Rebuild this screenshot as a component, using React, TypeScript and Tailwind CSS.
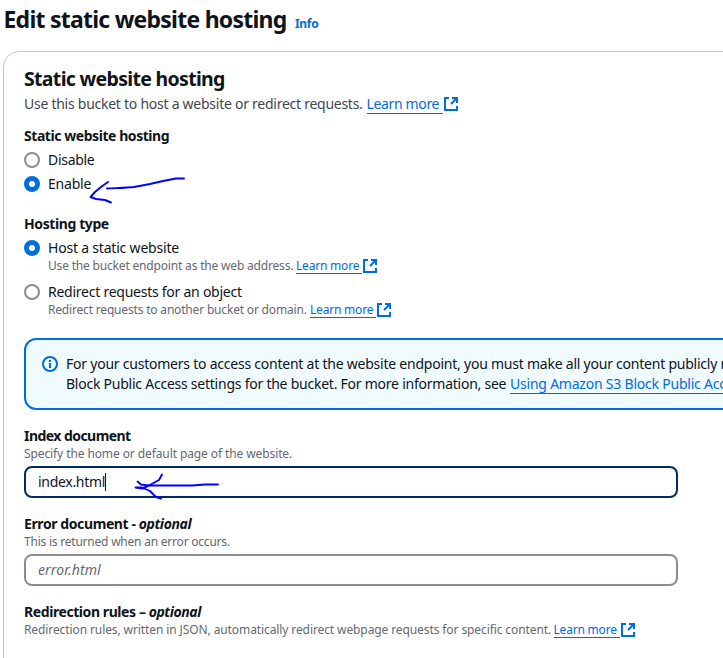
import React from "react";

function ExternalIcon() {
  return (
    <svg className="inline-block h-4 w-4 shrink-0" viewBox="0 0 16 16" fill="none" stroke="#006ce0" strokeWidth="2">
      <path d="M6 2H2v12h12v-4" />
      <path d="M9 2h5v5M14 2L8 8" />
    </svg>
  );
}

function LearnMore({ small = false }: { small?: boolean }) {
  return (
    <a className="flex text-[#006ce0]">
      <span
        className={
          small
            ? "h-4 w-[66px] border-b border-[#006ce0] tracking-[-0.2px]"
            : "h-5 w-[76px] border-b border-[#006ce0] tracking-[-0.35px]"
        }
      >
        Learn more
      </span>
      <span className={small ? "flex" : "flex pt-0.5"}>
        <ExternalIcon />
      </span>
    </a>
  );
}

function Radio({ checked = false }: { checked?: boolean }) {
  return (
    <span
      className={
        checked
          ? "mt-0.5 box-border h-4 w-4 shrink-0 rounded-full border-5 border-[#006ce0] bg-white"
          : "mt-0.5 box-border h-4 w-4 shrink-0 rounded-full border-2 border-[#8c8c94] bg-white"
      }
    />
  );
}

export default function App() {
  return (
    <div className="relative h-[658px] w-[723px] overflow-hidden bg-white font-['Noto_Sans',sans-serif] text-sm leading-5 whitespace-nowrap text-[#0f141a]">
      <header className="flex h-[51px] items-baseline pt-1 pl-[3.5px]">
        <h1 className="w-[291.5px] text-[23px] leading-[31px] font-bold tracking-[-0.76px]">Edit static website hosting</h1>
        <a className="text-xs font-bold tracking-[-0.3px] text-[#006ce0]">Info</a>
      </header>

      <main className="ml-[3px] h-[640px] w-[800px] rounded-tl-2xl border border-[#c6c6cd] pt-[15px] pl-5">
        <h2 className="text-[19.5px] leading-6 font-bold tracking-[-0.68px]">Static website hosting</h2>
        <div className="mt-[3px] flex text-[#424650]">
          <p className="w-[342.5px] tracking-[-0.26px]">Use this bucket to host a website or redirect requests.</p>
          <LearnMore />
        </div>

        <h3 className="mt-3 font-bold tracking-[-0.44px]">Static website hosting</h3>
        <div className="mt-1 flex gap-2">
          <Radio />
          <span className="tracking-[-0.3px]">Disable</span>
        </div>
        <div className="mt-1 flex gap-2">
          <Radio checked />
          <span className="tracking-[-0.2px]">Enable</span>
        </div>

        <h3 className="mt-5 font-bold tracking-[-0.4px]">Hosting type</h3>
        <div className="mt-1 flex gap-2">
          <Radio checked />
          <div>
            <div className="tracking-[-0.2px]">Host a static website</div>
            <div className="flex text-xs leading-4 text-[#656871]">
              <p className="w-[248px] tracking-[-0.18px]">Use the bucket endpoint as the web address.</p>
              <LearnMore small />
            </div>
          </div>
        </div>
        <div className="mt-2 flex gap-2">
          <Radio />
          <div>
            <div className="tracking-[-0.25px]">Redirect requests for an object</div>
            <div className="flex text-xs leading-4 text-[#656871]">
              <p className="w-[262px] tracking-[-0.18px]">Redirect requests to another bucket or domain.</p>
              <LearnMore small />
            </div>
          </div>
        </div>

        <section className="mt-5 flex h-[72px] rounded-xl border-2 border-[#006ce0] bg-[#f0fbff] pt-3.5 pl-4">
          <svg className="mt-0.5 mr-2 h-4 w-4 shrink-0" viewBox="0 0 16 16" fill="none" stroke="#006ce0" strokeWidth="2">
            <circle cx="8" cy="8" r="7" />
            <path d="M8 4v2M8 7v5" />
          </svg>
          <div>
            <p className="tracking-[-0.23px]">
              For your customers to access content at the website endpoint, you must make all your content publicly readable.
            </p>
            <div className="flex">
              <span className="w-[444px] tracking-[-0.24px]">Block Public Access settings for the bucket. For more information, see</span>
              <a className="h-5 border-b border-[#006ce0] tracking-[-0.22px] text-[#006ce0]">Using Amazon S3 Block Public Access</a>
            </div>
          </div>
        </section>

        <h3 className="mt-4 font-bold tracking-[-0.55px]">Index document</h3>
        <p className="text-xs leading-4 tracking-[-0.1px] text-[#656871]">Specify the home or default page of the website.</p>
        <div className="mt-1 flex h-8 w-[654px] items-center rounded-lg border-2 border-[#002b66] bg-white pl-3">
          <span className="tracking-[-0.3px]">index.html</span>
          <span className="h-[18px] w-px bg-black" />
        </div>

        <h3 className="mt-4 font-bold tracking-[-0.4px]">
          Error document - <em>optional</em>
        </h3>
        <p className="text-xs leading-4 tracking-[-0.22px] text-[#656871]">This is returned when an error occurs.</p>
        <div className="mt-1 flex h-8 w-[654px] items-center rounded-lg border-2 border-[#8c8c94] bg-white pl-3">
          <span className="tracking-[0.1px] text-[#656871] italic">error.html</span>
        </div>

        <h3 className="mt-4 font-bold tracking-[-0.42px]">
          Redirection rules – <em>optional</em>
        </h3>
        <div className="flex text-xs leading-4 text-[#656871]">
          <p className="w-[529.5px] tracking-[-0.1px]">Redirection rules, written in JSON, automatically redirect webpage requests for specific content.</p>
          <LearnMore small />
        </div>
      </main>

      <svg
        className="pointer-events-none absolute inset-0"
        width="723"
        height="658"
        fill="none"
        stroke="#0000ff"
        strokeWidth="1.9"
        strokeLinecap="round"
        strokeLinejoin="round"
      >
        <path d="M107 188.500C116 188 126 188 134 187L150 184L163 181L176 178.500H184" />
        <path d="M108 182L101 187L95 192L90.500 197L96 199L105 200L111 202.500" />
        <path d="M137.500 481.500L141 484.500L149 485.500H170H192L205 484.500H218" />
        <path d="M162 474.500L159 480L148 486L142 488.500L135.500 487.500H142L150 491L156 497L161 498.500" />
      </svg>
    </div>
  );
}
